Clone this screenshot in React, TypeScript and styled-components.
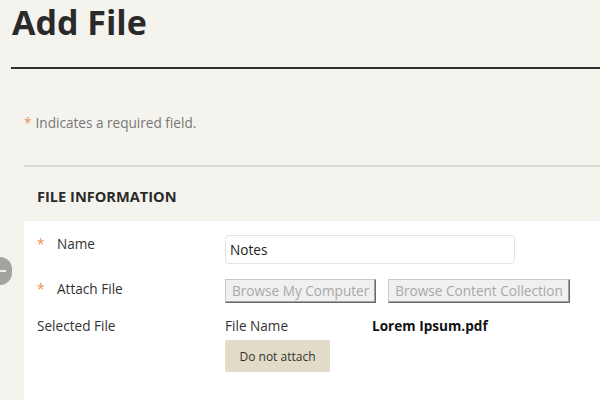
import React from "react"
import styled, { createGlobalStyle } from "styled-components"

const GlobalStyle = createGlobalStyle`
  html, body {
    margin: 0;
    padding: 0;
    background: #f4f3ee;
    font-family: "Open Sans", "Liberation Sans", sans-serif;
    color: #333;
  }
  #root {
    width: 600px;
    height: 400px;
    overflow: hidden;
    position: relative;
  }
`

const Page = styled.div`
  width: 600px;
  height: 400px;
`

const Header = styled.div`
  margin-left: 11px;
  height: 69px;
  border-bottom: 2px solid #2e2e2e;
  box-sizing: border-box;
`

const Title = styled.h1`
  margin: 0;
  padding-left: 1px;
  font-size: 34px;
  font-weight: 700;
  line-height: 44px;
  color: #2a2a2a;
`

const Body = styled.div`
  margin-left: 24px;
`

const RequiredNote = styled.div`
  height: 98px;
  box-sizing: border-box;
  padding-top: 44px;
  font-size: 13.6px;
  color: #777;
  line-height: 20px;
  border-bottom: 2px solid #dcdbd7;
`

const Star = styled.span`
  color: #f0904c;
  margin-right: 4px;
`

const SectionTitle = styled.h2`
  margin: 0;
  height: 54px;
  box-sizing: border-box;
  padding: 4px 0 0 13px;
  display: flex;
  align-items: center;
  font-size: 14.6px;
  font-weight: 700;
  color: #2a2a2a;
`

const Panel = styled.div`
  background: #fff;
  padding: 12px 0 30px 13px;
  display: flex;
  flex-direction: column;
`

const Row = styled.div<{ $gap?: number }>`
  display: grid;
  grid-template-columns: 188px 1fr;
  margin-bottom: ${(p) => p.$gap ?? 0}px;
`

const Label = styled.div<{ $offset?: number }>`
  display: flex;
  align-items: flex-start;
  padding-top: ${(p) => p.$offset ?? 0}px;
  font-size: 13.6px;
  line-height: 20px;
  color: #333;
`

const LabelStar = styled.span`
  color: #f0904c;
  width: 20px;
`

const TextInput = styled.input`
  width: 290px;
  height: 29px;
  box-sizing: border-box;
  border: 1px solid #e3e3e3;
  border-radius: 4px;
  padding: 0 4px;
  font-family: inherit;
  font-size: 13.6px;
  color: #222;
  margin-top: 2px;
  outline: none;
`

const ButtonRow = styled.div`
  display: flex;
  gap: 12px;
`

const BrowseButton = styled.button`
  height: 24px;
  box-sizing: border-box;
  padding: 0 6px;
  background: #f0f0f0;
  border: 1px solid;
  border-color: #c8c8c8 #6a6a6a #6a6a6a #c8c8c8;
  box-shadow: inset -1px -1px 0 #a0a0a0;
  font-family: inherit;
  font-size: 13.6px;
  color: #a8a8a8;
  line-height: 20px;
  border-radius: 0;
`

const FileCell = styled.div`
  display: flex;
  flex-direction: column;
  gap: 4px;
`

const FileLine = styled.div`
  display: grid;
  grid-template-columns: 147px 1fr;
  font-size: 13.6px;
  line-height: 20px;
  color: #333;
`

const FileValue = styled.span`
  font-weight: 700;
  color: #111;
`

const PlainButton = styled.button`
  width: 105px;
  height: 32px;
  border: none;
  border-radius: 2px;
  background: #e2dbc8;
  font-family: inherit;
  font-size: 12px;
  color: #333;
`

const SideTab = styled.div`
  position: absolute;
  left: 0;
  top: 257px;
  width: 12px;
  height: 28px;
  border-radius: 0 14px 14px 0;
  background: #a3a3a1;
  display: flex;
  align-items: center;

  &::after {
    content: "";
    width: 6px;
    height: 2px;
    background: #f0f0f0;
  }
`

const App: React.FC = () => {
  return (
    <Page>
      <GlobalStyle />
      <Header>
        <Title>Add File</Title>
      </Header>
      <Body>
        <RequiredNote>
          <Star>*</Star>Indicates a required field.
        </RequiredNote>
        <SectionTitle>FILE INFORMATION</SectionTitle>
        <Panel>
          <Row $gap={15}>
            <Label $offset={1}>
              <LabelStar>*</LabelStar>Name
            </Label>
            <div>
              <TextInput defaultValue="Notes" />
            </div>
          </Row>
          <Row $gap={13}>
            <Label>
              <LabelStar>*</LabelStar>Attach File
            </Label>
            <ButtonRow>
              <BrowseButton>Browse My Computer</BrowseButton>
              <BrowseButton>Browse Content Collection</BrowseButton>
            </ButtonRow>
          </Row>
          <Row>
            <Label>Selected File</Label>
            <FileCell>
              <FileLine>
                <span>File Name</span>
                <FileValue>Lorem Ipsum.pdf</FileValue>
              </FileLine>
              <PlainButton>Do not attach</PlainButton>
            </FileCell>
          </Row>
        </Panel>
      </Body>
      <SideTab />
    </Page>
  )
}

export default App
